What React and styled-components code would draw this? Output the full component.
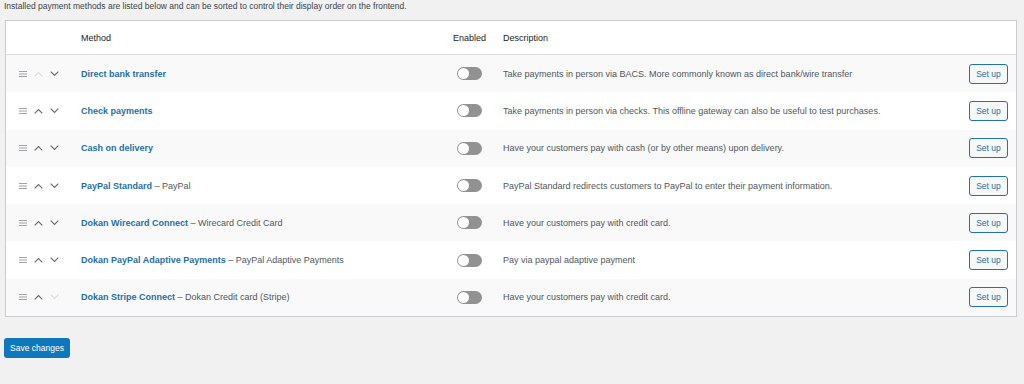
import styled, { createGlobalStyle } from 'styled-components';

const GlobalStyle = createGlobalStyle`
  body {
    margin: 0;
    background: #f1f1f1;
    font-family: "Liberation Sans", Arial, sans-serif;
    color: #3c434a;
  }
`;

const Page = styled.div`
  padding: 0 7px 0 4px;
`;

const Intro = styled.p`
  margin: 0;
  font-size: 8.5px;
  line-height: 12px;
  color: #3c434a;
`;

const Table = styled.div`
  margin: 8px 0 0 1px;
  background: #fff;
  border: 1px solid #c9ccd0;
`;

const Row = styled.div`
  display: flex;
  align-items: center;
  height: ${(p) => (p.$head ? '33px' : '37.3px')};
  background: ${(p) => (p.$striped ? '#f9f9f9' : '#fff')};
  border-bottom: ${(p) => (p.$head ? '1px solid #dcdcde' : 'none')};
  font-size: 9px;
`;

const SortCell = styled.div`
  width: 75px;
  display: flex;
  align-items: center;
  gap: 7px;
  padding-left: 13px;
  box-sizing: border-box;
`;

const MethodCell = styled.div`
  width: 372px;
  color: #50575e;
`;

const EnabledCell = styled.div`
  width: 50px;
  padding-left: ${(p) => (p.$head ? '0' : '4px')};
  box-sizing: border-box;
`;

const DescCell = styled.div`
  flex: 1;
  color: #50575e;
`;

const ActionCell = styled.div`
  padding-right: 8px;
`;

const HeadText = styled.span`
  color: #1d2327;
`;

const Name = styled.a`
  color: #1e6fa8;
  font-weight: bold;
  text-decoration: none;
`;

const Toggle = styled.span`
  display: block;
  position: relative;
  width: 25px;
  height: 13px;
  border-radius: 7px;
  background: #929292;
  &::after {
    content: '';
    position: absolute;
    left: 1px;
    top: 1px;
    width: 11px;
    height: 11px;
    border-radius: 50%;
    background: #fff;
  }
`;

const SetUp = styled.button`
  width: 39px;
  height: 20px;
  padding: 0;
  border: 1px solid #2271b1;
  border-radius: 3px;
  background: #f6f7f7;
  color: #2271b1;
  font-family: inherit;
  font-size: 8.5px;
`;

const Save = styled.button`
  margin-top: 21px;
  width: 66px;
  height: 20px;
  padding: 0;
  border: none;
  border-radius: 3px;
  background: #0f78bd;
  color: #fff;
  font-family: inherit;
  font-size: 8.5px;
`;

const Handle = () => (
  <svg width="8" height="6" viewBox="0 0 8 6">
    <path d="M0 .5h8M0 3h8M0 5.5h8" stroke="#a0a3a8" strokeWidth="1" />
  </svg>
);

const Chevron = ({ up, faded }) => (
  <svg width="9" height="6" viewBox="0 0 9 6">
    <path
      d={up ? 'M.7 5.3 4.5 1.5 8.3 5.3' : 'M.7.7 4.5 4.5 8.3.7'}
      fill="none"
      stroke={faded ? '#d8dadd' : '#646970'}
      strokeWidth="1.1"
    />
  </svg>
);

const methods = [
  { name: 'Direct bank transfer', desc: 'Take payments in person via BACS. More commonly known as direct bank/wire transfer' },
  { name: 'Check payments', desc: 'Take payments in person via checks. This offline gateway can also be useful to test purchases.' },
  { name: 'Cash on delivery', desc: 'Have your customers pay with cash (or by other means) upon delivery.' },
  { name: 'PayPal Standard', sub: 'PayPal', desc: 'PayPal Standard redirects customers to PayPal to enter their payment information.' },
  { name: 'Dokan Wirecard Connect', sub: 'Wirecard Credit Card', desc: 'Have your customers pay with credit card.' },
  { name: 'Dokan PayPal Adaptive Payments', sub: 'PayPal Adaptive Payments', desc: 'Pay via paypal adaptive payment' },
  { name: 'Dokan Stripe Connect', sub: 'Dokan Credit card (Stripe)', desc: 'Have your customers pay with credit card.' },
];

export default function App() {
  return (
    <Page>
      <GlobalStyle />
      <Intro>
        Installed payment methods are listed below and can be sorted to control their display order on the frontend.
      </Intro>
      <Table>
        <Row $head>
          <SortCell />
          <MethodCell><HeadText>Method</HeadText></MethodCell>
          <EnabledCell $head><HeadText>Enabled</HeadText></EnabledCell>
          <DescCell><HeadText>Description</HeadText></DescCell>
        </Row>
        {methods.map((m, i) => (
          <Row key={m.name} $striped={i % 2 === 0}>
            <SortCell>
              <Handle />
              <Chevron up faded={i === 0} />
              <Chevron faded={i === methods.length - 1} />
            </SortCell>
            <MethodCell>
              <Name href="#">{m.name}</Name>
              {m.sub && <> – {m.sub}</>}
            </MethodCell>
            <EnabledCell><Toggle /></EnabledCell>
            <DescCell>{m.desc}</DescCell>
            <ActionCell><SetUp>Set up</SetUp></ActionCell>
          </Row>
        ))}
      </Table>
      <Save>Save changes</Save>
    </Page>
  );
}
